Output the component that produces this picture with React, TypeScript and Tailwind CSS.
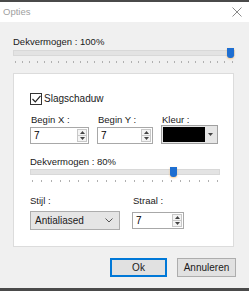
import React from 'react';

const font = { fontFamily: '"Liberation Sans", Arial, sans-serif' };

const Spin: React.FC = () => (
  <div className="flex flex-col w-[10px] h-[13px] my-auto mr-[1px] border border-[#c8c8c8] bg-[#f4f4f4]">
    <div className="flex-1 flex items-center justify-center border-b border-[#c8c8c8]">
      <svg width="5" height="3" viewBox="0 0 5 3"><path d="M0 3 L2.5 0 L5 3Z" fill="#444" /></svg>
    </div>
    <div className="flex-1 flex items-center justify-center">
      <svg width="5" height="3" viewBox="0 0 5 3"><path d="M0 0 L2.5 3 L5 0Z" fill="#444" /></svg>
    </div>
  </div>
);

const NumBox: React.FC<{ w: string; value: string }> = ({ w, value }) => (
  <div className={`flex h-[17px] border border-[#a8a8a8] bg-white ${w}`}>
    <span className="flex-1 pl-[3px] text-[10px] leading-[15px] text-black">{value}</span>
    <Spin />
  </div>
);

const Slider: React.FC<{ ticks: number; pos: number }> = ({ ticks, pos }) => (
  <div className="relative h-[16px]">
    <div className="absolute left-0 right-0 top-[2px] h-[6px] bg-[#e3e3e3] border border-[#d8d8d8]" />
    <div
      className="absolute top-0 w-[7px] h-[10px] bg-[#1f6fd1] rounded-b-[3px] shadow-[0_1px_2px_rgba(255,170,60,0.6)]"
      style={{ left: `calc(${pos}% - 4px)` }}
    />
    <div className="absolute left-[2px] right-[2px] top-[13px] flex justify-between">
      {Array.from({ length: ticks }).map((_, i) => (
        <div key={i} className="w-px h-[2px] bg-[#b0b0b0]" />
      ))}
    </div>
  </div>
);

export default function App() {
  return (
    <div className="w-[249px] h-[291px] flex flex-col bg-[#f0f0f0] text-[9.5px] text-[#1a1a1a]" style={font}>
      <div className="h-[2px] bg-[#4a4a4a]" />
      <div className="h-[20px] bg-white flex items-center justify-between pl-[3px] pr-[7px]">
        <span className="text-[9.5px] text-[#a0a0a0]">Opties</span>
        <svg width="10" height="10" viewBox="0 0 10 10">
          <path d="M0.5 0.5 L9.5 9.5 M9.5 0.5 L0.5 9.5" stroke="#8a8a8a" strokeWidth="1" />
        </svg>
      </div>
      <div className="flex-1 flex flex-col px-[13px] pr-[15px]">
        <div className="mt-[14px] leading-[12px]">Dekvermogen : 100%</div>
        <div className="mr-[-1px]">
          <Slider ticks={31} pos={98} />
        </div>
        <div className="mt-[9px] h-[174px] bg-white border border-[#dcdcdc] flex flex-col pl-[16px] pr-[13px]">
          <div className="mt-[19px] flex items-center gap-[2px]">
            <div className="w-[12px] h-[12px] border border-[#333] flex items-center justify-center">
              <svg width="9" height="8" viewBox="0 0 9 8"><path d="M0.5 4 L3.3 6.8 L8.5 0.8" stroke="#222" strokeWidth="1.2" fill="none" /></svg>
            </div>
            <span className="leading-[12px] text-[10px]">Slagschaduw</span>
          </div>
          <div className="mt-[9px] flex items-start">
            <div className="flex flex-col">
              <span className="leading-[12px] ml-[1px] mb-[1px]">Begin X :</span>
              <NumBox w="w-[59px]" value="7" />
            </div>
            <div className="flex flex-col ml-[8px]">
              <span className="leading-[12px] ml-[1px] mb-[1px]">Begin Y :</span>
              <NumBox w="w-[56px]" value="7" />
            </div>
            <div className="flex flex-col ml-[8px]">
              <span className="leading-[12px] ml-[1px] mb-[-1px]">Kleur :</span>
              <div className="flex h-[19px] w-[57px] border border-[#a0a0a0] bg-[#e6e6e6] p-[1px]">
                <div className="flex-1 bg-black" />
                <div className="w-[11px] flex items-center justify-center">
                  <svg width="5" height="3" viewBox="0 0 5 3"><path d="M0 0 L2.5 3 L5 0Z" fill="#444" /></svg>
                </div>
              </div>
            </div>
          </div>
          <div className="mt-[12px] leading-[12px]">Dekvermogen : 80%</div>
          <div className="mt-[-1px]">
            <Slider ticks={21} pos={76} />
          </div>
          <div className="mt-[12px] flex">
            <div className="flex flex-col">
              <span className="leading-[12px] mb-[4px]">Stijl :</span>
              <div className="flex items-center h-[19px] w-[90px] border border-[#adadad] bg-[#e5e5e5] pl-[4px] pr-[6px] justify-between">
                <span className="text-[10px]">Antialiased</span>
                <svg width="8" height="5" viewBox="0 0 8 5"><path d="M0.5 0.5 L4 4 L7.5 0.5" stroke="#555" fill="none" /></svg>
              </div>
            </div>
            <div className="flex flex-col ml-[12px]">
              <span className="leading-[12px] mb-[5px] ml-[1px]">Straal :</span>
              <NumBox w="w-[52px]" value="7" />
            </div>
          </div>
        </div>
        <div className="mt-[11px] flex justify-end gap-[10px] mr-[-2px]">
          <button className="w-[57px] h-[19px] border-2 border-[#0078d7] bg-[#e1e1e1] text-[10px] leading-none">Ok</button>
          <button className="w-[59px] h-[19px] border border-[#adadad] bg-[#e1e1e1] text-[10px] leading-none">Annuleren</button>
        </div>
      </div>
      <div className="h-[3px] bg-[#4a4a4a]" />
    </div>
  );
}
